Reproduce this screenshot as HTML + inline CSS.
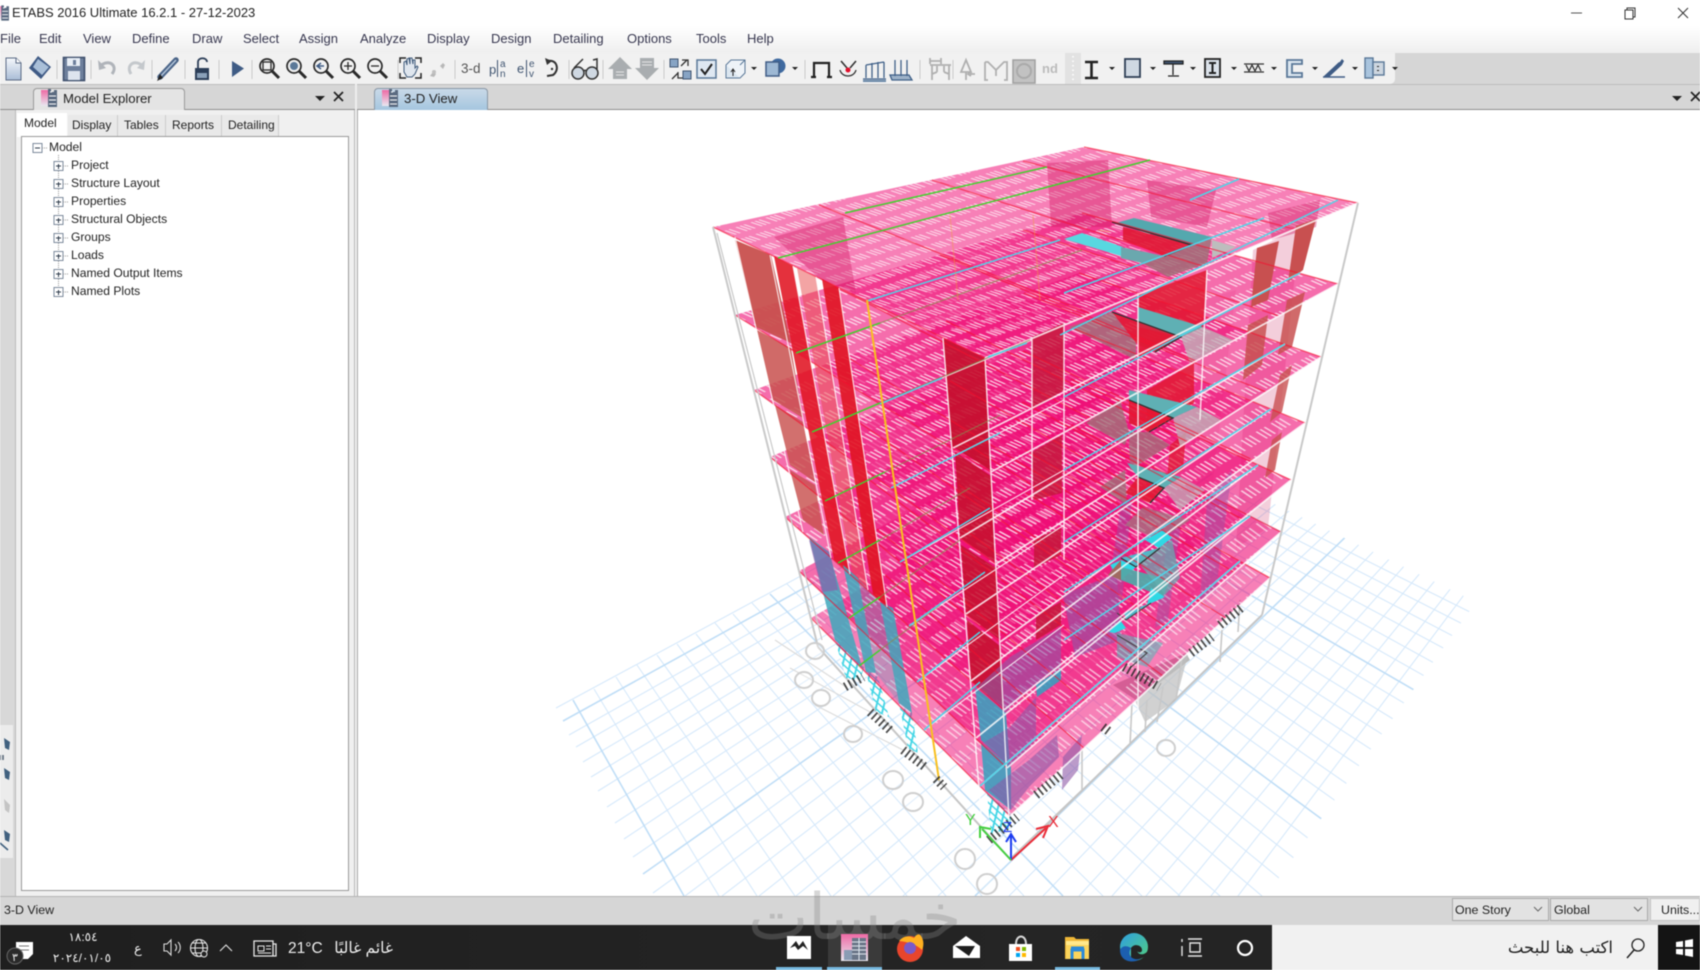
<!DOCTYPE html>
<html lang="en"><head><meta charset="utf-8"><title>ETABS 2016</title>
<style>
html,body{margin:0;padding:0;width:1700px;height:970px;overflow:hidden;background:#fff}
body{font-family:"Liberation Sans",sans-serif;color:#222}
#w{position:absolute;left:0;top:0;width:1700px;height:970px;overflow:hidden;filter:blur(.45px)}
.a{position:absolute;white-space:nowrap}
.b{position:absolute}
.m{top:31px;font-size:13px;line-height:16px;color:#37374f}
.t{font-size:12.1px;line-height:16px;color:#222;left:71px}
.tab{top:117px;font-size:12px;line-height:16px;color:#222}
.ar{font-family:"Liberation Sans","DejaVu Sans",sans-serif;color:#eee}
</style></head><body><div id="w">
<!-- title + menu -->
<div class="b" style="left:0;top:26px;width:1700px;height:28px;background:linear-gradient(#fff,#eeeeee)"></div>
<div class="b" style="left:0;top:53px;width:1700px;height:32px;background:#d6d6d6"></div>
<div class="b" style="left:0;top:53px;width:1395px;height:31px;background:#f1f1f1;border-radius:0 0 5px 0"></div>
<div class="b" style="left:0;top:84px;width:1700px;height:26px;background:#d6d6d6;border-top:1px solid #bdbdbd;box-sizing:border-box;border-bottom:1px solid #8e8e8e"></div>
<div class="a" style="left:12px;top:5px;font-size:13px;line-height:16px;color:#222">ETABS 2016 Ultimate 16.2.1 - 27-12-2023</div>
<span class="a m" style="left:0">File</span><span class="a m" style="left:39px">Edit</span><span class="a m" style="left:83px">View</span><span class="a m" style="left:132px">Define</span><span class="a m" style="left:192px">Draw</span><span class="a m" style="left:243px">Select</span><span class="a m" style="left:299px">Assign</span><span class="a m" style="left:360px">Analyze</span><span class="a m" style="left:427px">Display</span><span class="a m" style="left:491px">Design</span><span class="a m" style="left:553px">Detailing</span><span class="a m" style="left:627px">Options</span><span class="a m" style="left:696px">Tools</span><span class="a m" style="left:747px">Help</span>

<!-- left strip and panel -->
<div class="b" style="left:0;top:110px;width:15px;height:786px;background:#d8d8d8"></div>
<div class="b" style="left:0;top:725px;width:13px;height:133px;background:#ececec"></div>
<div class="b" style="left:15px;top:110px;width:340px;height:786px;background:#f0f0f0;border-left:1px solid #bbb;border-right:1px solid #bbb;box-sizing:border-box"></div>
<div class="b" style="left:355px;top:84px;width:2px;height:812px;background:#eee"></div>
<div class="b" style="left:357px;top:110px;width:1343px;height:786px;background:#fff;border-left:1px solid #aaa;box-sizing:border-box"></div>
<!-- explorer tab -->
<div class="b" style="left:33px;top:88px;width:152px;height:22px;background:#e4e4e4;border:1px solid #9a9a9a;border-bottom:none;border-radius:4px 4px 0 0;box-sizing:border-box"></div>
<div class="a" style="left:63px;top:91px;font-size:13.2px;line-height:16px;color:#222">Model Explorer</div>
<div class="b" style="left:374px;top:88px;width:114px;height:22px;background:linear-gradient(#c9d9e8,#a5c6df);border:1px solid #8a98a6;border-bottom:none;border-radius:4px 4px 0 0;box-sizing:border-box"></div>
<div class="a" style="left:404px;top:91px;font-size:13.2px;line-height:16px;color:#222">3-D View</div>
<!-- panel tabs -->
<div class="b" style="left:17px;top:113px;width:50px;height:24px;background:#fff"></div>
<div class="b" style="left:68px;top:115px;width:49px;height:21px;background:#e9e9e9;border-right:1px solid #ccc"></div>
<div class="b" style="left:118px;top:115px;width:47px;height:21px;background:#e9e9e9;border-right:1px solid #ccc"></div>
<div class="b" style="left:166px;top:115px;width:55px;height:21px;background:#e9e9e9;border-right:1px solid #ccc"></div>
<div class="b" style="left:222px;top:115px;width:56px;height:21px;background:#e9e9e9;border-right:1px solid #ccc"></div>
<span class="a tab" style="left:24px;top:115px">Model</span><span class="a tab" style="left:72px">Display</span><span class="a tab" style="left:124px">Tables</span><span class="a tab" style="left:172px">Reports</span><span class="a tab" style="left:228px">Detailing</span>
<!-- tree -->
<div class="b" style="left:21px;top:136px;width:328px;height:755px;background:#fff;border:1px solid #9a9a9a;box-sizing:border-box"></div>
<span class="a t" style="left:49px;top:139px">Model</span>
<span class="a t" style="top:157px">Project</span><span class="a t" style="top:175px">Structure Layout</span><span class="a t" style="top:193px">Properties</span><span class="a t" style="top:211px">Structural Objects</span><span class="a t" style="top:229px">Groups</span><span class="a t" style="top:247px">Loads</span><span class="a t" style="top:265px">Named Output Items</span><span class="a t" style="top:283px">Named Plots</span>

<!-- 3D view -->
<svg class="b" style="left:358px;top:110px" width="1342" height="786" viewBox="358 110 1342 786" xmlns="http://www.w3.org/2000/svg">
<defs>
<clipPath id="gc"><polygon points="0,896 0,0 800,0 1096,417 1476,602 1266,896"/></clipPath>
<pattern id="h0" width="20" height="15" patternUnits="userSpaceOnUse" patternTransform="matrix(1 .34 -1 .32 0 0)"><path d="M1 1h11v1.700H1zM1 5h11v1.700H1zM1 9h11v1.700H1z" fill="#fff"/></pattern>
<pattern id="h1" width="20" height="15" patternUnits="userSpaceOnUse" patternTransform="matrix(1 .445 -1 .42 0 0)"><path d="M1 1h11v1.600H1zM1 5h11v1.600H1zM1 9h11v1.600H1z" fill="#fff"/></pattern>
<pattern id="h2" width="20" height="15" patternUnits="userSpaceOnUse" patternTransform="matrix(1 .53 -1 .5 0 0)"><path d="M1 1h11v1.500H1zM1 5h11v1.500H1zM1 9h11v1.500H1z" fill="#fff"/></pattern>
<pattern id="h3" width="20" height="15" patternUnits="userSpaceOnUse" patternTransform="matrix(1 .6 -1 .57 0 0)"><path d="M1 1h11v1.400H1zM1 5h11v1.400H1zM1 9h11v1.400H1z" fill="#fff"/></pattern>
<pattern id="h4" width="20" height="15" patternUnits="userSpaceOnUse" patternTransform="matrix(1 .67 -1 .64 0 0)"><path d="M1 1h11v1.400H1zM1 5h11v1.400H1zM1 9h11v1.400H1z" fill="#fff"/></pattern>
<pattern id="h5" width="20" height="15" patternUnits="userSpaceOnUse" patternTransform="matrix(1 .73 -1 .7 0 0)"><path d="M1 1h11v1.300H1zM1 5h11v1.300H1zM1 9h11v1.300H1z" fill="#fff"/></pattern>
<pattern id="h6" width="20" height="15" patternUnits="userSpaceOnUse" patternTransform="matrix(1 .78 -1 .75 0 0)"><path d="M1 1h11v1.300H1zM1 5h11v1.300H1zM1 9h11v1.300H1z" fill="#fff"/></pattern>
<pattern id="cy" width="6" height="6" patternUnits="userSpaceOnUse" patternTransform="matrix(1 .9 -.25 1 0 0)"><rect width="6" height="6" fill="#fff"/><path d="M0 1H6M1.500 0V6" stroke="#45d6e6" stroke-width="1.600" fill="none"/></pattern>
</defs>
<!-- ground grid -->
<g clip-path="url(#gc)" fill="none">
<path stroke="#d6e9fb" stroke-width="1.100" d="M594 689L719 896M616 677L757 896M637 665L795 896M657 655L831 896M677 644L869 896M696 634L907 896M715 623L946 896M733 614L982 896M752 603L1024 896M787 584L1103 896M804 575L1142 896M820 567L1180 896M836 558L1220 896M852 549L1262 896M867 541L1301 896M882 533L1342 896M897 525L1384 896M926 509L1469 896M940 502L1509 896M954 494L1553 896M967 487L1597 896M980 480L1638 896M993 473L1681 896M1006 466L1681 868M1030 453L1681 821M1042 447L1681 799M1054 440L1681 775M1066 434L1681 755M1077 428L1681 735M1088 422L1681 717"/>
<path stroke="#d6e9fb" stroke-width="1.100" d="M556 708L1939 -38M569 735L1939 -38M576 747L1939 -38M583 762L1939 -38M591 777L1939 -38M598 791L1939 -38M607 807L1939 -38M615 823L1939 -38M624 839L1939 -38M633 857L1939 -38M653 893L1939 -38M685 896L1939 -38M722 896L1939 -38M759 896L1939 -38M796 896L1939 -38M833 896L1939 -38M868 896L1939 -38M903 896L1939 -38M938 896L1939 -38M1009 896L1939 -38M1043 896L1939 -38M1079 896L1939 -38M1112 896L1939 -38M1146 896L1939 -38M1178 896L1939 -38M1211 896L1939 -38M1238 896L1939 -38"/>
<path stroke="#c0def7" stroke-width="1.600" d="M573 700L684 896M770 594L1063 896M912 517L1426 896M1018 460L1681 845M563 721L1939 -38M643 874L1939 -38M975 896L1939 -38"/>
</g>
<!-- base frame -->
<g fill="none" stroke="#c6c6c6" stroke-width="2">
<path d="M818 647L1011 860L1262 615"/>
<path d="M1011 858L1082 790" stroke-width="1.500"/>
<path d="M846 687L775 640M870 712L790 668M903 750L815 705" stroke="#dcdcdc" stroke-width="1.200"/>
</g>
<!-- gray core at base -->
<polygon points="1113,685 1186,653 1190,660 1136,700" fill="#b9b9b9"/>
<polygon points="1130,690 1188,655 1176,700 1145,722" fill="#bdbdbd" opacity=".7"/>
<!-- basement hatched columns -->
<polygon points="835,640 864,667 860,680 846,678" fill="url(#cy)"/>
<polygon points="866,672 877,673 889,717 876,712" fill="url(#cy)"/>
<polygon points="899,703 912,713 918,753 908,748" fill="url(#cy)"/>
<polygon points="987,793 1011,813 1011,828 991,834" fill="url(#cy)"/>
<!-- far columns lower right -->
<path d="M1082 750V790M1132 703L1130 745M1147 700L1145 732M1163 687L1157 722M1182 657L1176 700M1222 630L1220 662M1240 600L1238 632" stroke="#c8c8c8" stroke-width="1.600" fill="none"/>
<!-- rear dark strips -->
<polygon points="1253,250 1300,228 1268,528 1236,548" fill="#c8205a" opacity=".22"/>
<polygon points="1203,300 1236,290 1200,590 1178,600" fill="#c8205a" opacity=".12"/>
<!-- slabs bottom to top -->
<g fill="#ef0c74" fill-opacity=".6">
<polygon points="811,618 1070,467 1270,578 1010,816" fill-opacity=".52"/><polygon points="811,618 1070,467 1270,578 1010,816" fill="url(#h6)" fill-opacity=".6"/>
<polygon points="799,571 1071,425 1281,532 1007,768"/><polygon points="799,571 1071,425 1281,532 1007,768" fill="url(#h5)" fill-opacity=".65"/>
<polygon points="785,517 1071,379 1291,480 1004,710"/><polygon points="785,517 1071,379 1291,480 1004,710" fill="url(#h4)" fill-opacity=".7"/>
<polygon points="770,457 1075,329 1305,423 1000,642"/><polygon points="770,457 1075,329 1305,423 1000,642" fill="url(#h3)" fill-opacity=".72"/>
<polygon points="754,390 1079,273 1321,357 996,564"/><polygon points="754,390 1079,273 1321,357 996,564" fill="url(#h2)" fill-opacity=".75"/>
<polygon points="735,315 1082,213 1338,284 991,472"/><polygon points="735,315 1082,213 1338,284 991,472" fill="url(#h1)" fill-opacity=".78"/>
<polygon points="713,227 1084,147 1358,203 985,358" fill-opacity=".52"/><polygon points="713,227 1084,147 1358,203 985,358" fill="url(#h0)" fill-opacity=".72"/>
</g>
<!-- darker patches on roof -->
<g fill="#d0145f" opacity=".38">
<polygon points="774,237 843,217 856,293 821,280"/>
<polygon points="1047,163 1108,160 1112,227 1051,227"/>
<polygon points="1147,180 1216,190 1207,227 1151,217"/>
<polygon points="1268,213 1320,200 1316,227 1272,240"/>
</g>
<!-- rear muted red columns -->
<g fill="#c85050">
<polygon points="1257,248 1279,241 1268,300 1251,307"/>
<polygon points="1296,226 1316,219 1303,270 1288,282"/>
<polygon points="1248,325 1268,315 1262,365 1243,380" opacity=".85"/>
<polygon points="1287,300 1305,292 1292,347 1278,355" opacity=".85"/>
<polygon points="1280,375 1292,365 1282,412 1270,422" opacity=".8"/>
<polygon points="1272,440 1282,432 1275,470 1265,478" opacity=".8"/>
</g>
<!-- left face walls -->
<g>
<polygon points="735,240 771,255 791,343 756,327" fill="#c8504e" opacity=".95"/>
<polygon points="757,330 791,348 803,418 773,400" fill="#c8504e" opacity=".85"/>
<polygon points="775,405 803,422 815,482 790,465" fill="#c8504e" opacity=".82"/>
<polygon points="790,470 815,485 824,535 803,520" fill="#c8504e" opacity=".82"/>
<polygon points="774,256 793,266 850,574 834,560" fill="#e01422" opacity=".88"/>
<polygon points="797,268 816,277 868,590 853,577" fill="#e84a4a" opacity=".5"/>
<polygon points="822,279 839,288 887,607 873,594" fill="#e01422" opacity=".9"/>
<polygon points="943,338 985,358 990,470 952,446" fill="#c4102c" opacity=".9"/>
<polygon points="955,452 991,476 995,562 960,538" fill="#c4102c" opacity=".85"/>
<polygon points="961,545 996,568 1000,640 966,614" fill="#c4102c" opacity=".85"/>
<polygon points="967,620 1000,646 1004,708 971,681" fill="#c4102c" opacity=".85"/>
<!-- teal -->
<polygon points="809,537 829,552 862,667 835,640" fill="#3ea8bc" opacity=".85"/>
<polygon points="843,565 858,578 876,673 866,672" fill="#3ea8bc" opacity=".85"/>
<polygon points="880,602 893,608 912,713 899,703" fill="#3ea8bc" opacity=".85"/>
<polygon points="858,578 880,602 899,703 876,673" fill="#3ea8bc" opacity=".28"/>
<polygon points="975,687 1006,713 1010,767 981,740" fill="#3a9fbe" opacity=".88"/>
<polygon points="981,743 1011,767 1011,810 985,790" fill="#3a9fbe" opacity=".88"/>
</g>
<!-- front right walls -->
<g>
<polygon points="1032,337 1064,323 1064,390 1032,410" fill="#c4183a" opacity=".82"/>
<polygon points="1032,452 1062,435 1062,493 1034,500" fill="#c4183a" opacity=".82"/>
<polygon points="1034,540 1061,527 1061,555 1034,568" fill="#c4183a" opacity=".85"/>
<polygon points="1036,615 1061,602 1061,625 1036,640" fill="#c4183a" opacity=".85"/>
<polygon points="1036,685 1061,668 1061,680 1037,697" fill="#3a9fbe" opacity=".9"/>
<polygon points="1139,295 1207,270 1203,327 1138,357" fill="#e0162c" opacity=".82"/>
<polygon points="1147,390 1194,363 1194,403 1147,432" fill="#e0162c" opacity=".78"/>
<polygon points="1170,445 1186,432 1183,470 1167,480" fill="#e0162c" opacity=".7"/>
</g>
<!-- purple bands -->
<g fill="#8e5aa8" opacity=".6">
<polygon points="1063,595 1117,573 1121,640 1075,657"/>
<polygon points="977,687 1010,657 1061,627 1061,667 1040,680 1010,707 1006,713"/>
<polygon points="983,743 1010,727 1036,697 1036,740 1010,767"/>
<polygon points="989,790 1029,760 1057,735 1059,757 1029,787 1011,810"/>
<polygon points="1122,500 1132,500 1122,600 1106,600" opacity=".7"/>
<polygon points="1207,500 1232,470 1216,590 1200,600" opacity=".7"/>
<polygon points="1170,520 1182,515 1168,620 1155,628" opacity=".7"/>
<polygon points="809,540 830,552 838,590 822,592"/>
<polygon points="1063,757 1082,735 1078,770 1062,790"/>
</g>
<!-- stair core -->
<g>
<polygon points="1116,223 1134,218 1212,237 1192,245" fill="#54a8ae"/>
<polygon points="1123,227 1192,245 1164,256 1123,240" fill="#e01a34" opacity=".9"/>
<polygon points="1064,239 1082,233 1123,247 1121,256" fill="#58d8e0"/>
<polygon points="1212,240 1236,247 1212,258" fill="#bdbdbd"/>
<polygon points="1142,263 1212,237 1207,263 1168,277" fill="#a07078" opacity=".85"/>
<polygon points="1121,247 1164,256 1142,263 1121,258" fill="#6aa8ae"/>
<path d="M1112 222L1192 245L1164 256" fill="none" stroke="#333" stroke-width="1.500"/>
<polygon points="1138,307 1203,327 1181,337 1138,327" fill="#5fb0b4"/>
<polygon points="1112,312 1181,337 1155,352 1136,343" fill="#e01a34" opacity=".9"/>
<polygon points="1069,327 1112,312 1136,343 1136,360" fill="#a07078" opacity=".8"/>
<polygon points="1181,337 1203,327 1233,340 1190,363" fill="#c0b0b8" opacity=".8"/>
<path d="M1112 312L1181 337L1155 352" fill="none" stroke="#333" stroke-width="1.300"/>
<polygon points="1129,390 1197,407 1173,418 1129,400" fill="#5fb0b4"/>
<polygon points="1129,400 1173,418 1149,432 1129,423" fill="#e01a34" opacity=".9"/>
<polygon points="1086,423 1120,400 1129,432 1125,445" fill="#a07078" opacity=".8"/>
<polygon points="1173,418 1197,407 1221,420 1180,446" fill="#c0b0b8" opacity=".8"/>
<polygon points="1129,432 1149,432 1170,445 1130,470" fill="#a07078" opacity=".75"/>
<path d="M1129 400L1173 418L1149 432" fill="none" stroke="#333" stroke-width="1.300"/>
<polygon points="1127,463 1181,477 1164,488 1138,477" fill="#5fb0b4"/>
<polygon points="1138,477 1164,488 1150,503 1125,493" fill="#e01a34" opacity=".9"/>
<polygon points="1100,487 1125,470 1127,505" fill="#a07078" opacity=".8"/>
<polygon points="1164,488 1181,477 1205,490 1180,510" fill="#c0b0b8" opacity=".75"/>
<path d="M1138 477L1164 488L1150 503" fill="none" stroke="#333" stroke-width="1.300"/>
<polygon points="1143,507 1190,520 1160,540 1125,525" fill="#a07880" opacity=".75"/>
<polygon points="1163,530 1172,538 1159,548 1145,540" fill="#2fd8e4"/>
<polygon points="1121,558 1159,548 1136,567" fill="#4fb8cc"/>
<polygon points="1121,560 1136,567 1121,580 1110,565" fill="#2fd8e4"/>
<polygon points="1121,567 1170,580 1163,597 1121,580" fill="#52a8a8" opacity=".95"/>
<polygon points="1136,560 1172,540 1180,578 1165,595" fill="#62b0b0" opacity=".7"/>
<polygon points="1108,575 1121,560 1121,580" fill="#a06a60"/>
<path d="M1160 548L1136 567L1121 558" fill="none" stroke="#333" stroke-width="1.300"/>
<polygon points="1151,588 1165,597 1147,605" fill="#2fd8e4"/>
<polygon points="1124,613 1151,603 1126,620" fill="#4fb8cc"/>
<polygon points="1109,632 1120,620 1126,628 1115,633" fill="#2fd8e4"/>
<polygon points="1117,633 1163,643 1147,667 1117,657" fill="#52b8b8" opacity=".55"/>
<path d="M1151 603L1126 620L1117 613M1117 635L1147 653L1130 668" fill="none" stroke="#444" stroke-width="1.100"/>
</g>
<!-- red edges and beams -->
<g fill="none" stroke="#f5102f" stroke-width="1.300" opacity=".62">
<path d="M713 227L985 358M1084 147L1358 203M819 205L1091 314M932 180L1205 267M1023 161L1295 229"/>
<path d="M735 315L991 472M1082 213L1338 284M834 286L1090 418M940 255L1196 361M1023 230L1279 316"/>
<path d="M754 390L996 564M1079 273L1321 357M847 357L1089 505M946 321L1188 442M1024 293L1266 392"/>
<path d="M770 457L1000 642M1075 329L1305 423M857 421L1087 580M950 381L1180 513M1023 351L1253 460"/>
<path d="M785 517L1004 710M1071 379L1291 480M867 478L1086 644M954 436L1173 574M1022 402L1242 519"/>
<path d="M799 571L1007 768M1071 425L1281 532M877 529L1085 701M959 485L1169 629M1025 450L1234 572"/>
<path d="M811 618L1010 816M1070 467L1270 578M885 575L1084 748M964 529L1163 676M1026 493L1226 618"/>
</g>
<!-- white lines -->
<g fill="none" stroke="#fff" stroke-width="1.800" opacity=".8">
<path d="M985 358L1358 203M991 472L1338 284M996 564L1321 357M1000 642L1305 423M1004 710L1291 480M1007 768L1281 532M1010 816L1270 578"/>
<path d="M953 448L1300 273M960 538L1285 344M966 614L1271 409M971 681L1258 465M976 738L1250 516M980 786L1240 561"/>
<path d="M1032 337V500M1064 323V560M1138 293V720M985 358L1011 858M943 338L982 826M1207 270L1200 420" stroke-width="1.500"/>
<path d="M880 404L1032 340M891 488L1064 400M900 562L1064 470M909 626L1064 525M917 682L1064 575M924 730L1064 625" stroke-width="1.200"/>
<path d="M735 237L803 532M770 255L831 558M793 266L850 574M816 277L868 590M839 288L887 607" stroke-width="1.200"/>
</g>
<!-- coloured v lines -->
<g fill="none" stroke-width="1.500">
<path stroke="#45d030" d="M778 258L1150 160M845 213L1047 167M796 353L880 323M812 432L880 403M825 501L885 472M838 563L880 540M849 618L880 597M859 666L880 650"/>
<path stroke="#8a8a50" stroke-width="1.200" opacity=".7" d="M880 323L1082 250M880 403L1030 340M885 472L1000 415M880 540L970 488M880 597L960 540M880 650L940 605"/>
<path stroke="#50d4e8" d="M867 301L1060 240M1190 200L1239 179M1064 293L1264 218M880 404L942 378M988 357L1027 343M1060 335L1338 200M891 488L1000 433M1064 397L1300 273M900 562L990 508M1064 470L1285 344M909 626L985 572M1064 542L1271 409M917 682L980 632M1064 592L1258 465M924 730L980 682M1064 640L1250 516M980 786L1240 561"/>
</g>
<!-- yellow line -->
<path d="M867 300L939 780" stroke="#f8c020" stroke-width="2" fill="none"/>
<path d="M1098 230L1110 232M1033 215L1040 300M950 215L958 300" stroke="#f0a040" stroke-width="1" opacity=".5" fill="none"/>
<!-- frame -->
<g fill="none" stroke="#c9c9c9" stroke-width="2">
<path d="M713 227L818 647M1358 203L1262 615"/>
<path d="M717 233L822 640" stroke-width="1.200"/>
</g>
<!-- supports -->
<g fill="none" stroke="#262626" stroke-width="9" stroke-dasharray="1.800 3.200" opacity=".82">
<path d="M845 687L863 677M870 712L892 732M903 750L925 767M936 779L944 787M989 840L1017 817M1036 795L1063 773M1103 727L1111 733M1124 667L1159 687M1191 653L1212 637M1220 625L1241 608"/>
</g>
<!-- bubbles -->
<g fill="#fff" fill-opacity=".3" stroke="#cfcfcf" stroke-width="2">
<ellipse cx="815" cy="651" rx="9" ry="8"/><ellipse cx="804" cy="680" rx="9" ry="8"/><ellipse cx="821" cy="698" rx="9" ry="8"/><ellipse cx="853" cy="734" rx="9" ry="8"/><ellipse cx="893" cy="780" rx="10" ry="9"/><ellipse cx="913" cy="802" rx="10" ry="9"/><ellipse cx="1166" cy="748" rx="9" ry="8"/><ellipse cx="965" cy="859" rx="10" ry="10"/><ellipse cx="987" cy="884" rx="10" ry="10"/>
</g>
<!-- axes -->
<g fill="none" stroke-width="2">
<path d="M1011 860L1046 828" stroke="#ea2c38"/><path d="M1036 829L1048 826L1043 838" stroke="#ea2c38"/>
<path d="M1011 860V836" stroke="#1c3cf0"/><path d="M1006 842L1011 834L1016 842" stroke="#1c3cf0"/>
<path d="M1011 860L982 829" stroke="#44d040"/><path d="M980 838L980 827L991 829" stroke="#44d040"/>
</g>
<text x="1048" y="827" font-family="Liberation Sans" font-size="16" fill="#ea2c38">X</text>
<text x="1003" y="832" font-family="Liberation Sans" font-size="15" fill="#1c3cf0">Z</text>
<text x="965" y="825" font-family="Liberation Sans" font-size="16" fill="#44d040">Y</text>
</svg>

<!-- status bar -->
<div class="b" style="left:0;top:896px;width:1700px;height:29px;background:#d6d6d6;border-top:1px solid #b4b4b4;box-sizing:border-box"></div>
<div class="a" style="left:4px;top:902px;font-size:12.400px;line-height:16px;color:#222">3-D View</div>
<div class="b" style="left:1452px;top:898px;width:97px;height:23px;background:#e2e2e2;border:1px solid #aaa;box-sizing:border-box"></div>
<div class="b" style="left:1550px;top:898px;width:98px;height:23px;background:#e2e2e2;border:1px solid #aaa;box-sizing:border-box"></div>
<div class="b" style="left:1650px;top:898px;width:50px;height:23px;background:#f0f0f0;border:1px solid #c4c4c4;box-sizing:border-box"></div>
<div class="a" style="left:1455px;top:902px;font-size:12.400px;line-height:16px">One Story</div>
<div class="a" style="left:1554px;top:902px;font-size:12.400px;line-height:16px">Global</div>
<div class="a" style="left:1661px;top:902px;font-size:12.400px;line-height:16px">Units...</div>

<!-- taskbar -->
<div class="b" style="left:0;top:925px;width:1700px;height:45px;background:linear-gradient(90deg,#1f1f1f,#252525 60%,#232323)"></div>
<div class="b" style="left:1272px;top:925px;width:386px;height:45px;background:#f1f1f1"></div>
<div class="b" style="left:1658px;top:925px;width:42px;height:45px;background:#141414"></div>
<div class="b" style="left:828px;top:925px;width:54px;height:42px;background:#3a3a3a"></div>
<div class="b" style="left:776px;top:967px;width:46px;height:3px;background:#76b9e0"></div>
<div class="b" style="left:827px;top:967px;width:55px;height:3px;background:#76b9e0"></div>
<div class="b" style="left:1055px;top:967px;width:45px;height:3px;background:#76b9e0"></div>
<div class="a" style="left:748px;top:878px;font-family:'DejaVu Sans',sans-serif;font-size:64px;line-height:80px;color:rgba(135,135,135,.34)">خمسات</div>
<div class="a ar" style="left:64px;top:929px;font-size:12px;line-height:16px;width:38px;text-align:center">١٨:٥٤</div>
<div class="a ar" style="left:50px;top:950px;font-size:12px;line-height:16px;width:64px;text-align:center">٢٠٢٤/٠١/٠٥</div>
<div class="a ar" style="left:134px;top:941px;font-size:13px;line-height:16px">ع</div>
<div class="a ar" style="left:288px;top:941px;font-size:15.500px;line-height:16px">21°C</div>
<div class="a ar" style="left:325px;top:941px;font-size:15.500px;line-height:16px;width:68px;text-align:right">غائم غالبًا</div>
<div class="a" style="left:1495px;top:938px;font-family:'DejaVu Sans',sans-serif;font-size:16.500px;line-height:20px;color:#222;width:118px;text-align:right">اكتب هنا للبحث</div>

<!-- chrome icons -->
<svg class="b" style="left:0;top:0" width="1700" height="970" viewBox="0 0 1700 970" xmlns="http://www.w3.org/2000/svg" font-family="Liberation Sans">
<defs>
<linearGradient id="d1" x1="0" y1="0" x2="0" y2="1"><stop offset="0" stop-color="#f6f8fc"/><stop offset="1" stop-color="#a9bdd6"/></linearGradient>
<linearGradient id="bk" x1="0" y1="0" x2="0" y2="1"><stop offset="0" stop-color="#ee6aa5"/><stop offset="1" stop-color="#e8e8f0"/></linearGradient>
<linearGradient id="ed" x1="0" y1="0" x2="1" y2="1"><stop offset="0" stop-color="#2f9fe0"/><stop offset="1" stop-color="#52d080"/></linearGradient>
<g id="mini"><rect x="-9" y="-8" width="8" height="16" fill="url(#bk)"/><path d="M-2 -9h3v3h3v-2h3v17h-9z" fill="#5a6a80"/><path d="M0 -6h2M-1 -2h7M-1 2h7M-1 6h7" stroke="#fff" stroke-width="1"/></g>
<path id="ar" d="M-3 0h6l-3 3z" fill="#222"/>
</defs>
<!-- titlebar icon & controls -->
<use href="#mini" transform="translate(3 13) scale(.85)"/>
<path d="M1571 13h11" stroke="#555" stroke-width="1"/>
<path d="M1625 10h8v9h-8zM1627 10V8h8v9h-2" fill="none" stroke="#333"/>
<path d="M1678 8L1688 18M1688 8L1678 18" stroke="#333" fill="none"/>
<!-- tab icons -->
<use href="#mini" transform="translate(50 98)"/><use href="#mini" transform="translate(391 98)"/>
<!-- panel controls -->
<path d="M315 96h10l-5 5z" fill="#222"/><path d="M334 92L343 101M343 92L334 101" stroke="#222" stroke-width="1.700"/>
<path d="M1672 96h10l-5 5z" fill="#222"/><path d="M1691 92L1700 101M1700 92L1691 101" stroke="#222" stroke-width="1.700"/>
<!-- tree glyphs -->
<g fill="#fff" stroke="#7c8a9c">
<rect x="33" y="143.500" width="9" height="9" />
<rect x="54" y="161.500" width="9" height="9"/><rect x="54" y="179.500" width="9" height="9"/><rect x="54" y="197.500" width="9" height="9"/><rect x="54" y="215.500" width="9" height="9"/><rect x="54" y="233.500" width="9" height="9"/><rect x="54" y="251.500" width="9" height="9"/><rect x="54" y="269.500" width="9" height="9"/><rect x="54" y="287.500" width="9" height="9"/>
</g>
<path d="M35 148h5M56 166h5M58.500 164v5M56 184h5M58.500 182v5M56 202h5M58.500 200v5M56 220h5M58.500 218v5M56 238h5M58.500 236v5M56 256h5M58.500 254v5M56 274h5M58.500 272v5M56 292h5M58.500 290v5" stroke="#2d3a4a" fill="none"/>
<path d="M58.500 155V161M58.500 171V179M58.500 189V197M58.500 207V215M58.500 225V233M58.500 243V251M58.500 261V269M58.500 279V287M42 148h6M63 166h6M63 184h6M63 202h6M63 220h6M63 238h6M63 256h6M63 274h6M63 292h6" stroke="#999" stroke-dasharray="1 1" fill="none"/>
<!-- left strip icons -->
<g fill="#41617f"><path d="M4 738L10 742L9 750L5 748z"/><path d="M4 768L10 772L9 780L5 778z"/><path d="M4 830L10 834L9 842L5 840z"/></g>
<path d="M4 799L10 805L9 813L5 810z" fill="#c4c4c4"/>
<path d="M0 755V760M3 755V760" stroke="#5a6a7a" stroke-width="1.600"/><path d="M0 843L8 850" stroke="#41617f" stroke-width="1.600"/>
<!-- combos chevrons -->
<path d="M1534 907L1538 911L1542 907M1634 907L1638 911L1642 907" stroke="#666" fill="none"/>
<!-- toolbar separators -->
<path d="M57 60V79M91 60V79M152 60V79M185 60V79M219 60V79M252 60V79M398 60V79M455 60V79M569 60V79M603 60V79M664 60V79M805 60V79M920 60V79M953 60V79" stroke="#c9c9c9" stroke-width="1"/>
<rect x="1065" y="53" width="16" height="31" fill="#e2e2e2"/><path d="M1073 56V82" stroke="#fff" stroke-dasharray="1.500 3" stroke-width="1.500"/>
<!-- new, open, save -->
<path d="M6 58h10l5 5v17H6z" fill="url(#d1)" stroke="#5a6a85"/><path d="M16 58v5h5" fill="#fff" stroke="#5a6a85"/>
<polygon points="29,68 38,56 51,67 41,79" fill="#3f5a85"/><polygon points="38,59 49,67 42,75 33,67" fill="#a9bfd8"/>
<rect x="63.500" y="57.500" width="21" height="23" fill="#6d7f9c" stroke="#3e4f6c" stroke-width="1.600"/><rect x="67" y="58" width="13" height="8" fill="#e8eef6"/><rect x="68" y="71" width="12" height="9" fill="#dde4ee"/><rect x="73" y="60" width="3" height="5" fill="#6d7f9c"/>
<!-- undo redo -->
<path d="M112 74C118 66 110 60 103 64L100 66" fill="none" stroke="#b0b4ba" stroke-width="3"/><path d="M98 60L99 70L106 68z" fill="#b0b4ba"/>
<path d="M131 74C126 66 133 60 140 64L143 66" fill="none" stroke="#c4c8cc" stroke-width="3"/><path d="M145 60L144 70L137 68z" fill="#c4c8cc"/>
<!-- pencil -->
<path d="M160 77L176 60" stroke="#4a6488" stroke-width="5.500" stroke-linecap="round"/><path d="M160 77L176 60" stroke="#b4c6da" stroke-width="1.500"/><path d="M157 81L160 74L163 78z" fill="#222"/>
<!-- lock -->
<rect x="195" y="68" width="14" height="12" fill="#2c3e58"/><rect x="197" y="73" width="10" height="5" fill="#8aa0b8"/><path d="M198 68V62C198 57 207 57 207 62" fill="none" stroke="#2c3e58" stroke-width="1.800"/>
<!-- play -->
<polygon points="232,61 244,68.500 232,77" fill="#3f5c85"/>
<!-- zooms -->
<g fill="none" stroke="#2a2a2a" stroke-width="1.700">
<circle cx="267" cy="66" r="7"/><path d="M272 71L279 78" stroke-width="3"/><rect x="263" y="62" width="8" height="8" stroke-width="1.300"/>
<circle cx="294" cy="66" r="7"/><path d="M299 71L306 78" stroke-width="3"/><circle cx="294" cy="66" r="4" fill="#5a7898" stroke="none"/>
<circle cx="321" cy="66" r="7"/><path d="M326 71L333 78" stroke-width="3"/><path d="M324 66h-6M321 63L317 66L321 69" stroke="#3f5c85" stroke-width="1.500"/>
<circle cx="348" cy="66" r="7"/><path d="M353 71L360 78" stroke-width="3"/><path d="M344 66h8M348 62v8" stroke-width="1.300"/>
<circle cx="375" cy="66" r="7"/><path d="M380 71L387 78" stroke-width="3"/><path d="M371 66h8" stroke-width="1.300"/>
</g>
<!-- hand -->
<path d="M400 63V58h6M415 58h6v5M421 73v5h-6M406 78h-6v-5" fill="none" stroke="#222" stroke-width="1.500"/>
<path d="M404 68V62l2-1 1 4V59l2-1 1 6V58l2 0 1 6V60l2 0 0 8 2-2 1 1-3 7-3 3h-5l-3-5z" fill="#dfe6ee" stroke="#3f5a7a"/>
<path d="M430 76l3-4 3 2-2 3zM440 66l3-3 2 2-2 4z" fill="#b8b8b8"/><circle cx="434" cy="72" r="2" fill="#c0c0c0"/>
<!-- view labels -->
<text x="461" y="73" font-size="13.500" fill="#555">3-d</text>
<text x="489" y="74" font-size="13" fill="#3f5470">p</text><path d="M497.500 60V77" stroke="#3f5470"/><text x="500" y="67" font-size="10" fill="#3f5470">a</text><text x="500" y="77" font-size="10" fill="#3f5470">n</text>
<text x="517" y="73" font-size="13" fill="#3f5470">e</text><path d="M526.500 60V77" stroke="#3f5470"/><text x="529" y="67" font-size="10" fill="#3f5470">e</text><text x="529" y="77" font-size="10" fill="#3f5470">v</text>
<path d="M548 61C557 59 560 70 553 75L547 76" fill="none" stroke="#333" stroke-width="2"/><path d="M545 58L552 61L547 65z" fill="#333"/><circle cx="552" cy="69" r="1.200" fill="#333"/>
<!-- glasses -->
<g fill="none" stroke="#333" stroke-width="1.500"><circle cx="578" cy="73" r="6" fill="#cfd8e2"/><circle cx="592" cy="73" r="6" fill="#cfd8e2"/><path d="M584 71C585 70 585 70 586 71M574 68L583 59M597 69V59l-4 1"/></g>
<!-- up down -->
<path d="M620 57L632 69H627V79H613V69H608z" fill="#a9adb0"/><path d="M616 72h8M616 75h8" stroke="#e4e4e4"/>
<path d="M647 80L635 68H640V58H654V68H659z" fill="#a9adb0"/><path d="M642 62h10M642 65h10" stroke="#e4e4e4"/>
<!-- select group -->
<rect x="670" y="59" width="8" height="8" fill="#87a4c4" stroke="#3f5470"/><path d="M682 60L688 60L688 66M681 66l6-6" fill="none" stroke="#333" stroke-width="1.300"/>
<path d="M678 72v6h6M672 79L678 73" fill="none" stroke="#333" stroke-width="1.300"/><rect x="683" y="71" width="8" height="8" fill="#87a4c4" stroke="#3f5470"/>
<rect x="697" y="60" width="19" height="18" fill="#dfe8f2" stroke="#5a7898" stroke-width="1.500"/><path d="M701 69L705 74L712 64" fill="none" stroke="#222" stroke-width="2"/>
<path d="M726 65h14v13h-14z" fill="#dbe6f0" stroke="#5a7898"/><path d="M726 65l5-5h14v13l-5 5M740 65l5-5" fill="#eef3f8" stroke="#5a7898"/><path d="M733 76V70M731 72L733 69L735 72" stroke="#222" fill="none"/>
<circle cx="778" cy="66" r="7.500" fill="#3f6aa0"/><rect x="766" y="62" width="13" height="14" fill="#9db8d4" stroke="#3f5c85" stroke-width="1.500"/>
<use href="#ar" transform="translate(754 67)"/><use href="#ar" transform="translate(795 67)"/>
<!-- draw group -->
<path d="M814 77V63H829V77" fill="none" stroke="#222" stroke-width="2.200"/><path d="M811 77h5M827 77h5" stroke="#222" stroke-width="2.200"/>
<path d="M841 61L847 68M856 61L850 68" stroke="#333" stroke-width="1.600"/><circle cx="848" cy="70" r="2.500" fill="#e0102c"/><path d="M840 70C842 78 854 78 856 70" fill="none" stroke="#333" stroke-width="1.300"/>
<path d="M866 78V65M872 78V63M878 78V62M884 78V62M866 65L884 62M863 79h23" fill="none" stroke="#3f6088" stroke-width="1.300"/><path d="M863 81h23" stroke="#6a88a8" stroke-width="2"/>
<path d="M895 60V76M901 60V76M907 60V76M892 80h20l-3-5h-19z" fill="#9db2c8" stroke="#3f6088" stroke-width="1.300"/>
<!-- disabled group -->
<g fill="none" stroke="#b0b0b0" stroke-width="1.800">
<path d="M930 58V64M930 61h11M941 58V64M930 65h21M932 65V80M949 65V80M937 66V72M944 66V72M932 74l5-2M949 74l-5-2"/>
<path d="M966 60L961 72H971zM966 72V80M975 74h-5M971 72l-3 2 3 2"/>
<path d="M985 62h3L996 70L1004 62h3V80h-3M985 62V80h3M996 70V76"/>
</g>
<rect x="1013" y="60" width="22" height="23" fill="#c2c2c2" stroke="#a0a0a0" stroke-width="1.500"/><circle cx="1024" cy="71" r="7" fill="none" stroke="#aaa" stroke-width="2"/>
<text x="1042" y="73" font-size="13" font-weight="bold" fill="#bbb">nd</text>
<!-- I section etc -->
<path d="M1085 62h13M1085 78h13M1091.500 62V78" fill="none" stroke="#222" stroke-width="2.600"/>
<use href="#ar" transform="translate(1112 67)"/>
<rect x="1125" y="59" width="15" height="18" fill="#cfd8e2" stroke="#2f3f55" stroke-width="1.800"/>
<use href="#ar" transform="translate(1153 67)"/>
<path d="M1164 61h19v3h-19zM1173 64V75M1168 76h11" fill="#3f5470" stroke="#222" stroke-width="1.300"/>
<use href="#ar" transform="translate(1193 67)"/>
<rect x="1205" y="59" width="15" height="18" fill="#dbe2ea" stroke="#222" stroke-width="1.800"/><path d="M1209 63h7M1209 73h7M1212.500 63V73" stroke="#222" stroke-width="2" fill="none"/>
<use href="#ar" transform="translate(1234 67)"/>
<path d="M1244 64h20M1244 72h20M1246 65l3 6 3-6 3 6 3-6 3 6" fill="none" stroke="#333" stroke-width="1.300"/>
<use href="#ar" transform="translate(1274 67)"/>
<path d="M1302 60h-15v17h15v-4h-10v-9h10z" fill="#dbe6f0" stroke="#5a7898" stroke-width="1.800"/>
<use href="#ar" transform="translate(1315 67)"/>
<path d="M1325 76l14-13 2 2-12 11zM1323 77h22" fill="#3f5c85" stroke="#3f5c85" stroke-width="1.400"/><path d="M1339 63l3-4 2 2-2 4z" fill="#3f5c85"/>
<use href="#ar" transform="translate(1355 67)"/>
<rect x="1365" y="58" width="8" height="20" fill="#a9c4de" stroke="#5a7898" stroke-width="1.400"/><rect x="1373" y="62" width="11" height="13" fill="#cdd6e0" stroke="#5a7898" stroke-width="1.400"/><path d="M1378 66v1M1378 70v1" stroke="#222" stroke-width="2"/>
<use href="#ar" transform="translate(1395 67)"/>
<!-- taskbar left -->
<path d="M16 942h17v12l-5 5H16z" fill="#fff"/><path d="M19 946h10M19 950h10" stroke="#777"/>
<circle cx="15" cy="956" r="8" fill="#2a2a2a" stroke="#666"/><text x="15" y="961" font-size="11" fill="#eee" text-anchor="middle" font-family="DejaVu Sans">٣</text>
<path d="M164 944v7h3l4 4V940l-4 4zM175 944c2 2 2 5 0 7M178 942c3 3 3 8 0 11" fill="none" stroke="#ddd" stroke-width="1.100"/>
<g fill="none" stroke="#e4e4e4" stroke-width="1.100"><circle cx="199" cy="948" r="8.500"/><ellipse cx="199" cy="948" rx="4" ry="8.500"/><path d="M190.500 948h17M192 943h14M192 953h14"/></g>
<circle cx="204" cy="954" r="3" fill="#222" stroke="#e4e4e4"/>
<path d="M220 951L226 945L232 951" fill="none" stroke="#e4e4e4" stroke-width="1.100"/>
<path d="M254 941h19v15h-19zM273 944h3v12h-3" fill="none" stroke="#e8e8e8" stroke-width="1.300"/><rect x="258" y="946" width="6" height="5" fill="none" stroke="#e8e8e8"/><path d="M266 946h5M266 949h5M258 953h13" stroke="#e8e8e8"/>
<!-- taskbar apps -->
<rect x="787" y="936" width="24" height="23" fill="#fff"/><path d="M790 948L796 941L799 946L803 941L808 950L803 946L798 950L795 946z" fill="#222"/>
<rect x="841" y="934" width="27" height="27" fill="url(#bk)"/><rect x="852" y="938" width="14" height="22" fill="#6a7688"/><path d="M852 942h14M852 946h14M852 950h14M852 954h14M859 938v22" stroke="#dfe6ee"/><rect x="844" y="950" width="8" height="10" fill="#8a9cb4"/>
<circle cx="910" cy="949" r="13" fill="#e8452c"/><path d="M899 941C903 936 909 935 914 938C917 933 920 934 921 936C924 940 924 946 922 950C916 944 908 942 899 941z" fill="#ffb020"/><circle cx="910" cy="948" r="6" fill="#7a5ac8"/>
<path d="M953 946L966 936L980 946V958H953z" fill="#fff"/><path d="M955 946L975 946L969 956z" fill="#1e1e1e"/>
<path d="M1009 944h23v17h-23z" fill="#fff"/><path d="M1016 944C1016 934 1026 934 1026 944" fill="none" stroke="#d8d8d8" stroke-width="2"/><rect x="1016" y="947" width="4" height="4" fill="#f25022"/><rect x="1022" y="947" width="4" height="4" fill="#7fba00"/><rect x="1016" y="953" width="4" height="4" fill="#00a4ef"/><rect x="1022" y="953" width="4" height="4" fill="#ffb900"/>
<path d="M1065 937h9l2 2h13v20h-24z" fill="#f0b838"/><path d="M1066 941h23v4h-23z" fill="#ffe88c"/><path d="M1066 945h23v14h-23z" fill="#fbd45c"/><path d="M1072 959V950h11v9" fill="none" stroke="#2b8ad8" stroke-width="3"/><path d="M1071 948h13" stroke="#2b8ad8" stroke-width="3"/>
<circle cx="1134" cy="947" r="14" fill="url(#ed)"/><path d="M1120 950C1120 962 1134 965 1143 957C1134 962 1126 956 1131 948C1126 945 1122 946 1120 950z" fill="#1c5fb0"/><path d="M1131 948C1134 943 1142 945 1142 950C1142 953 1138 953 1137 951C1139 956 1146 955 1148 950C1148 958 1136 962 1131 957z" fill="#242424"/>
<path d="M1182 939V942M1182 946V956M1188 939h14M1188 956h14M1190 943h10v9h-10z" fill="none" stroke="#e4e4e4" stroke-width="1.400"/>
<circle cx="1245" cy="948" r="7" fill="none" stroke="#fff" stroke-width="2.200"/>
<circle cx="1638" cy="945" r="6" fill="none" stroke="#222" stroke-width="1.300"/><path d="M1634 950L1627 958" stroke="#222" stroke-width="1.500"/>
<path d="M1676 942L1683 941V947H1676zM1685 940.500L1693 939V947H1685zM1676 949H1683V955L1676 954zM1685 949H1693V957L1685 955.500z" fill="#fff"/>
</svg>
</div></body></html>
